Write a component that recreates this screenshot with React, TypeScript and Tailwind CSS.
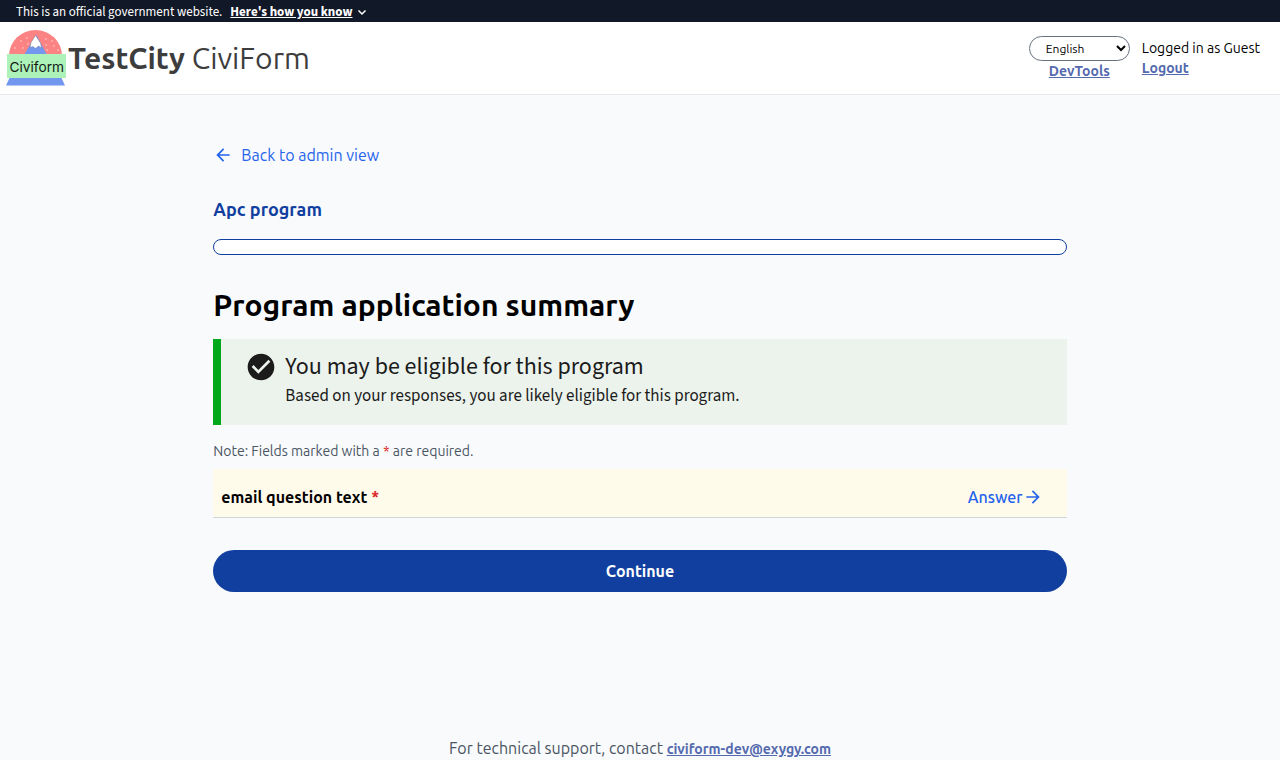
import { ReactNode } from "react";

const UI_FONT = "font-['Ubuntu','Noto_Sans',sans-serif]";
const SOURCE_FONT = "font-['Source_Sans_Pro','Source_Sans_3','Noto_Sans_CJK_SC',sans-serif]";

function Logo() {
  return (
    <svg viewBox="0 0 64 58" className="h-[58px] w-16 shrink-0" role="img" aria-label="Civiform">
      <path d="M5 27 A26.5 26 0 0 1 58 27 Z" fill="#fb8383" />
      <g fill="#fdd5d0">
        <circle cx="23" cy="9" r="0.8" />
        <circle cx="17" cy="12" r="0.8" />
        <circle cx="24" cy="15" r="0.8" />
        <circle cx="11" cy="19" r="0.8" />
        <circle cx="19" cy="19" r="0.8" />
        <circle cx="42" cy="10" r="0.8" />
        <circle cx="48" cy="12" r="0.8" />
        <circle cx="42" cy="16" r="0.8" />
        <circle cx="50" cy="17" r="0.8" />
        <circle cx="43" cy="21" r="0.8" />
        <circle cx="54" cy="21" r="0.8" />
      </g>
      <path d="M20 26 L30 9 L32 6 L34 9 L43 26 Z" fill="#7396ef" />
      <path
        d="M31.5 6.500 L36.500 14 L37.500 19 L34.500 17 L31.500 19.500 L29 17.500 L26 18.500 L27 13.500 Z"
        fill="#ffffff"
        stroke="#666a78"
        strokeWidth="0.4"
      />
      <path d="M6 48 H57 L61 56.500 H2 Z" fill="#7396ef" />
      <rect x="3" y="25" width="59" height="24" fill="#adf2b9" />
      <text x="5.500" y="42.500" fontSize="13.700" fontFamily="Inter, sans-serif" fill="#141a16">
        Civiform
      </text>
    </svg>
  );
}

function Arrow({ left = false, className }: { left?: boolean; className: string }) {
  return (
    <svg viewBox="0 0 24 24" className={className} fill="currentColor" aria-hidden="true">
      {left ? (
        <path d="M20 11H7.830l5.590-5.590L12 4l-8 8 8 8 1.410-1.410L7.830 13H20v-2z" />
      ) : (
        <path d="M12 4l-1.410 1.410L16.170 11H4v2h12.170l-5.580 5.590L12 20l8-8z" />
      )}
    </svg>
  );
}

function TextLink({ href, children }: { href: string; children: ReactNode }) {
  return (
    <a href={href} className="text-sm leading-5 font-bold text-[#5469ae] underline">
      {children}
    </a>
  );
}

function Banner() {
  return (
    <div className={`flex bg-[#111827] px-4 pt-1 pb-0.5 text-[13px] leading-4 text-white ${SOURCE_FONT}`}>
      <span>This is an official government website.</span>
      <button type="button" className="ml-2 flex items-center gap-1 font-bold">
        <span className="underline">Here's how you know</span>
        <svg viewBox="0 0 12 12" className="size-3" fill="none" stroke="currentColor" strokeWidth="1.500" aria-hidden="true">
          <path d="M2.500 4.500 L6 8 L9.500 4.500" />
        </svg>
      </button>
    </div>
  );
}

function Header() {
  return (
    <header className="flex items-center justify-between border-b border-gray-200 bg-white pr-5 pl-1">
      <a href="#home" className="flex h-[72px] items-center text-[30px] text-[#3d3d3d]">
        <Logo />
        <span>
          <b>TestCity</b> CiviForm
        </span>
      </a>
      <div className="flex gap-3">
        <div className="flex flex-col items-center">
          <select
            aria-label="Language"
            defaultValue="en"
            className="w-[101px] rounded-full border border-gray-500 bg-white py-1 pl-3 text-xs text-black"
          >
            <option value="en">English</option>
          </select>
          <TextLink href="#devtools">DevTools</TextLink>
        </div>
        <div className="flex flex-col items-start pt-0.5 text-sm leading-5 text-black">
          <span>Logged in as Guest</span>
          <TextLink href="#logout">Logout</TextLink>
        </div>
      </div>
    </header>
  );
}

export default function App() {
  return (
    <div className={`min-h-screen bg-[#f8fafc] ${UI_FONT}`}>
      <Banner />
      <Header />
      <main className="mx-auto flex w-2/3 flex-col pt-12">
        <a href="#admin" className="flex items-center gap-2 self-start text-base leading-6 text-[#2563eb]">
          <Arrow left className="size-5" />
          Back to admin view
        </a>
        <h2 className="mt-7 text-lg leading-7 font-bold text-[#113f9f]">Apc program</h2>
        <div className="mt-4 h-4 rounded-full border border-[#113f9f] bg-white" role="progressbar" aria-valuenow={0} aria-label="Progress" />
        <h1 className="mt-8 text-[30px] leading-9 font-bold text-black">Program application summary</h1>
        <section className={`mt-4 flex gap-2 border-l-8 border-[#00a91c] bg-[#ecf3ec] px-6 pt-3 pb-4 text-[#1b1b1b] ${SOURCE_FONT}`}>
          <svg viewBox="0 0 24 24" className="size-8 shrink-0" fill="currentColor" aria-hidden="true">
            <path d="M12 2C6.480 2 2 6.480 2 12s4.480 10 10 10 10-4.480 10-10S17.520 2 12 2zm-2 15l-5-5 1.410-1.410L10 14.170l7.590-7.590L19 8l-9 9z" />
          </svg>
          <div>
            <h3 className="text-2xl leading-8">You may be eligible for this program</h3>
            <p className="text-[17px] leading-[26px]">Based on your responses, you are likely eligible for this program.</p>
          </div>
        </section>
        <p className="mt-4 text-sm leading-5 text-[#4b5563]">
          Note: Fields marked with a <span className="text-[#dc2626]">*</span> are required.
        </p>
        <div className="mt-2 flex items-center justify-between border-b border-gray-300 bg-amber-50 pt-4 pr-6 pb-2 pl-2 leading-6">
          <span className="text-base font-bold text-black">
            email question text <span className="text-[#dc2626]">*</span>
          </span>
          <a href="#answer" className="flex items-center text-base font-medium text-[#2563eb]">
            Answer
            <Arrow className="size-5" />
          </a>
        </div>
        <button type="button" className="mt-8 h-[42px] rounded-full bg-[#113f9f] text-base font-bold text-white">
          Continue
        </button>
      </main>
      <footer className="mt-36 text-center text-base leading-6 text-[#4b5563]">
        For technical support, contact <TextLink href="mailto:civiform-dev@exygy.com">civiform-dev@exygy.com</TextLink>
      </footer>
    </div>
  );
}
